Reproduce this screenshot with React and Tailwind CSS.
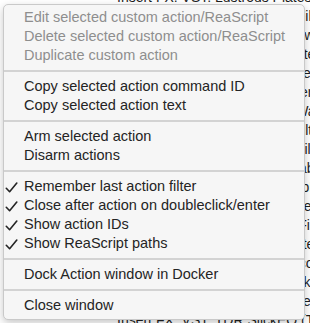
import React from "react";

const bgRows = [
  "Insert FX: VST: Lustrous Plates (Inear Audio)",
  "Insert FX: VST: Pro-Q 2 (FabFilter)",
  "Insert FX: VST: Z3ta+ 2 (Cakewalk)",
  "Insert FX: VST: Saturn (FabFilter)",
  "Insert FX: VST: Pro-R (FabFilter)",
  "Insert FX: VST: Pro-L (FabFilter)",
  "Insert FX: VST: Vocal Rider (Waves)",
  "Insert FX: VST: Pro-DS (FabFilter)",
  "Insert FX: VST: Pro-C 2 (FabFilter)",
  "Insert FX: VST: Timeless 2 (FabFilter)",
  "Insert FX: VST: Volcano 2 (FabFilter)",
  "Insert FX: VST: Pro-G (FabFilter)",
  "Insert FX: VST: Simplon (FabFilter)",
  "Insert FX: VST: Twin 2 (FabFilter)",
  "Insert FX: VST: OTT (Xfer Records)",
  "Insert FX: VST: TDR Nova (Tokyo Dawn Labs)",
  "Insert FX: VST: Vintage Warmer 2",
  "Insert FX: VST: TDR SlickEQ (Tokyo Dawn)",
];

const menu = [
  [
    { label: "Edit selected custom action/ReaScript", disabled: true },
    { label: "Delete selected custom action/ReaScript", disabled: true },
    { label: "Duplicate custom action", disabled: true },
  ],
  [{ label: "Copy selected action command ID" }, { label: "Copy selected action text" }],
  [{ label: "Arm selected action" }, { label: "Disarm actions" }],
  [
    { label: "Remember last action filter", checked: true },
    { label: "Close after action on doubleclick/enter", checked: true },
    { label: "Show action IDs", checked: true },
    { label: "Show ReaScript paths", checked: true },
  ],
  [{ label: "Dock Action window in Docker" }],
  [{ label: "Close window" }],
];

const Check = () => (
  <svg className="absolute left-[1px] top-[5px]" width="13" height="11" viewBox="0 0 13 11">
    <path d="M1.3 6.3 L4.6 9.7 L11.8 1" fill="none" stroke="#242424" strokeWidth="1.6" strokeLinecap="round" strokeLinejoin="round" />
  </svg>
);

const MenuItem = ({ item }) => (
  <div
    className={`relative h-[19px] flex items-center pl-[20px] text-[14.5px] leading-[19px] whitespace-nowrap ${
      item.disabled ? "text-[#8e8e8e]" : "text-[#242424]"
    }`}
  >
    {item.checked && <Check />}
    {item.label}
  </div>
);

export default function App() {
  return (
    <div className="relative w-[310px] h-[323px] overflow-hidden bg-white font-['Liberation_Sans',Arial,sans-serif]">
      <div className="pl-[117px] mt-[-12px] flex flex-col text-[14px] leading-[19px] text-[#1e1e1e] whitespace-nowrap">
        {bgRows.map((r, i) => (
          <div key={i} className="h-[19px]">
            {r}
          </div>
        ))}
      </div>

      <div className="absolute left-[3px] top-[4px] w-[302px] pt-[3px] pb-[4px] bg-[#f6f6f6] rounded-[5px] border border-[#c9c9c9] shadow-[0_3px_8px_rgba(0,0,0,0.22)]">
        {menu.map((group, gi) => (
          <div key={gi}>
            {gi > 0 && (
              <div className="py-[5px]">
                <div className="h-[2px] bg-[#d3d3d3]" />
              </div>
            )}
            {group.map((item, ii) => (
              <MenuItem key={ii} item={item} />
            ))}
          </div>
        ))}
      </div>
    </div>
  );
}
